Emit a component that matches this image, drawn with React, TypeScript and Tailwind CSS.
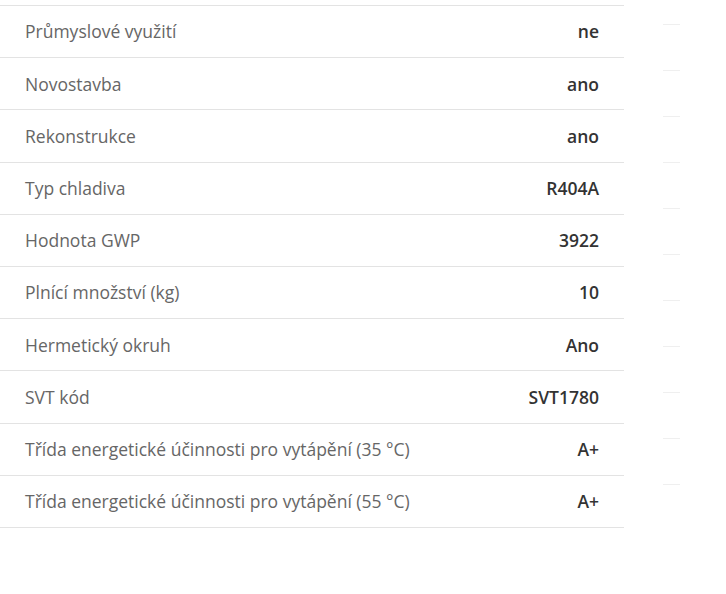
const rows: [string, string][] = [
  ["Průmyslové využití", "ne"],
  ["Novostavba", "ano"],
  ["Rekonstrukce", "ano"],
  ["Typ chladiva", "R404A"],
  ["Hodnota GWP", "3922"],
  ["Plnící množství (kg)", "10"],
  ["Hermetický okruh", "Ano"],
  ["SVT kód", "SVT1780"],
  ["Třída energetické účinnosti pro vytápění (35 °C)", "A+"],
  ["Třída energetické účinnosti pro vytápění (55 °C)", "A+"],
];

export default function App() {
  return (
    <div
      className="flex h-[594px] w-[726px] overflow-hidden bg-white"
      style={{ fontFamily: '"Open Sans", sans-serif' }}
    >
      <div className="w-[624px] pt-[5px]">
        <div className="border-t border-[#e3e3e3]">
          {rows.map(([label, value]) => (
            <div
              key={label}
              className="flex h-[52.2px] items-center justify-between border-b border-[#e3e3e3] pl-[25px] pr-[25px]"
            >
              <span className="text-[17.5px] text-[#666]">{label}</span>
              <span className="text-[17.5px] font-semibold text-[#333]">{value}</span>
            </div>
          ))}
        </div>
      </div>
      <div className="ml-[39px] flex flex-col gap-[45px] pt-[24px]">
        {rows.concat([["", ""]]).map((_, i) => (
          <div key={i} className="h-px w-[17px] bg-[#efefef]" />
        ))}
      </div>
    </div>
  );
}
